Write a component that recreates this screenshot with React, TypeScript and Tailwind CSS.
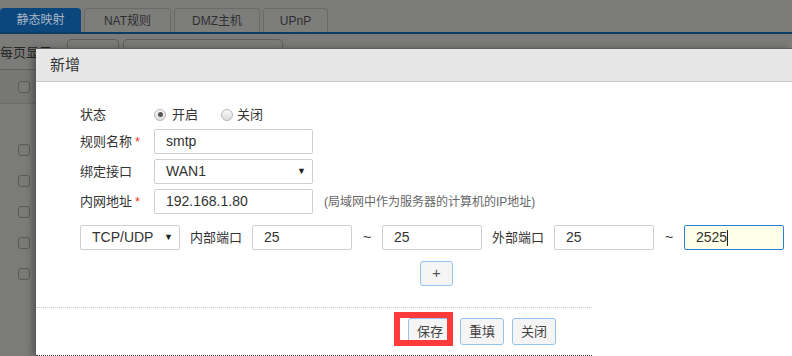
import React from "react";

const font = "font-['Liberation_Sans','Noto_Sans_CJK_SC',sans-serif]";

const Radio = ({ checked }: { checked?: boolean }) => (
  <span className="w-[12px] h-[12px] rounded-full border border-[#b5b5b5] bg-gradient-to-b from-[#fafafa] to-[#dcdcdc] flex items-center justify-center">
    {checked && <span className="w-[5px] h-[5px] rounded-full bg-[#555]" />}
  </span>
);

const Field = ({ label, required, children }: { label: string; required?: boolean; children: React.ReactNode }) => (
  <div className="flex items-center h-[25px]">
    <div className="w-[74px] text-[13px] text-[#333]">
      {label}
      {required && <span className="text-[#e8412c] ml-[3px]">*</span>}
    </div>
    {children}
  </div>
);

const TextBox = ({ value, w = "w-[159px]" }: { value: string; w?: string }) => (
  <div className={`${w} shrink-0 h-[25px] border border-[#cfcfcf] rounded-[2px] flex items-center pl-[11px] text-[14px] text-[#333]`}>
    {value}
  </div>
);

const Btn = ({ label }: { label: string }) => (
  <div className="w-[44px] h-[27px] border border-[#93c1f0] rounded-[3px] bg-[#f5f5f5] flex items-center justify-center text-[13px] text-[#444]">
    {label}
  </div>
);

const Checkbox = () => (
  <span className="block w-[12px] h-[12px] rounded-[3px] border border-[#5b5c5a] bg-[#7a7b79]" />
);

export default function App() {
  return (
    <div className={`relative w-[792px] h-[356px] overflow-hidden bg-[#7b7c7a] ${font}`}>
      {/* page behind the overlay */}
      <div className="pt-[8px]">
        <div className="flex items-end gap-[3px] border-b-2 border-[#0c3c66]">
          <div className="w-[81px] h-[24px] rounded-t-[4px] bg-[#0b477c] text-[#a8b6c6] text-[12px] flex items-center justify-center">静态映射</div>
          <div className="w-[87px] h-[24px] rounded-t-[4px] border border-b-0 border-[#6a6b69] bg-[#7d7e7c] text-[#2e2e2e] text-[12px] flex items-center justify-center">NAT规则</div>
          <div className="w-[86px] h-[24px] rounded-t-[4px] border border-b-0 border-[#6a6b69] bg-[#7d7e7c] text-[#2e2e2e] text-[12px] flex items-center justify-center">DMZ主机</div>
          <div className="w-[65px] h-[24px] rounded-t-[4px] border border-b-0 border-[#6a6b69] bg-[#7d7e7c] text-[#2e2e2e] text-[12px] flex items-center justify-center">UPnP</div>
        </div>
        <div className="flex items-start h-[35px] pt-[5px]">
          <div className="text-[13px] text-[#252525] mt-[4px] w-[67px]">每页显示</div>
          <div className="w-[52px] h-[26px] border border-[#5f605e] rounded-[4px] text-[13px] text-[#2a2a2a] pl-[16px] pt-[4px]">10</div>
          <div className="ml-[4px] w-[160px] h-[26px] border border-[#5f605e] rounded-[4px] text-[13px] text-[#2a2a2a] pl-[12px] pt-[5px]">请输入搜索内容</div>
        </div>
        <div className="border-t border-[#636462]">
          <div className="h-[34px] flex items-center pl-[18px] border-b border-[#6c6d6b] bg-[#777876]">
            <Checkbox />
          </div>
          <div className="h-[30px]" />
          {[0, 1, 2, 3, 4].map((i) => (
            <div key={i} className="h-[31px] flex items-center pl-[18px]">
              <Checkbox />
            </div>
          ))}
        </div>
      </div>

      {/* modal */}
      <div className="absolute left-[36px] top-[48px] right-0 bottom-0 bg-white border-t border-[#5d5d5d] shadow-[-4px_0_6px_rgba(0,0,0,0.3)] flex flex-col">
        <div className="h-[33px] shrink-0 bg-[#e6e6e6] border-b border-[#cbcbcb] flex items-center pl-[14px] text-[15px] text-[#333]">新增</div>

        <div className="pl-[44px] pt-[20px] flex flex-col">
          <div className="flex items-center h-[27px] pb-[2px]">
            <div className="w-[74px] text-[13px] text-[#333]">状态</div>
            <div className="flex items-center gap-[6px] text-[13px] text-[#333]">
              <Radio checked />
              <span>开启</span>
            </div>
            <div className="flex items-center gap-[4px] ml-[23px] text-[13px] text-[#333]">
              <Radio />
              <span>关闭</span>
            </div>
          </div>

          <div className="flex flex-col gap-[5px]">
            <Field label="规则名称" required>
              <TextBox value="smtp" />
            </Field>
            <Field label="绑定接口">
              <div className="w-[159px] h-[25px] border border-[#cfcfcf] rounded-[2px] flex items-center justify-between pl-[11px] pr-[6px] text-[14px] text-[#333]">
                <span>WAN1</span>
                <span className="text-[9px] text-[#222]">▼</span>
              </div>
            </Field>
            <Field label="内网地址" required>
              <TextBox value="192.168.1.80" />
              <span className="ml-[11px] text-[12px] text-[#666]">(局域网中作为服务器的计算机的IP地址)</span>
            </Field>
          </div>

          <div className="flex items-center h-[25px] mt-[11px] text-[13px] text-[#333]">
            <div className="w-[100px] shrink-0 h-[25px] border border-[#cfcfcf] rounded-[2px] flex items-center justify-between pl-[11px] pr-[6px] text-[14px]">
              <span>TCP/UDP</span>
              <span className="text-[9px] text-[#222]">▼</span>
            </div>
            <span className="ml-[10px] w-[62px] shrink-0">内部端口</span>
            <TextBox value="25" w="w-[100px]" />
            <span className="w-[30px] shrink-0 text-center text-[14px]">~</span>
            <TextBox value="25" w="w-[100px]" />
            <span className="ml-[10px] w-[62px] shrink-0">外部端口</span>
            <TextBox value="25" w="w-[100px]" />
            <span className="w-[30px] shrink-0 text-center text-[14px]">~</span>
            <div className="w-[100px] shrink-0 h-[25px] border border-[#2c7fdc] rounded-[2px] bg-[#ffffe8] flex items-center pl-[11px] text-[14px] text-[#333]">
              2525<span className="w-[1px] h-[16px] bg-[#222]" />
            </div>
          </div>

          <div className="mt-[11px] ml-[340px] w-[33px] h-[25px] border border-[#93c1f0] rounded-[3px] bg-[#f5f5f5] flex items-center justify-center text-[15px] text-[#555]">+</div>
        </div>

        <div className="mt-auto w-[556px] h-[49px] border-t border-dotted border-[#c8c8c8] border-b border-b-[#333] pt-[10px] flex gap-[8px] pl-[372px] relative">
          <Btn label="保存" />
          <Btn label="重填" />
          <Btn label="关闭" />
          <div className="absolute left-[358px] top-[4px] w-[59px] h-[34px] border-[6px] border-[#ff3a3a]" />
        </div>
      </div>
    </div>
  );
}
